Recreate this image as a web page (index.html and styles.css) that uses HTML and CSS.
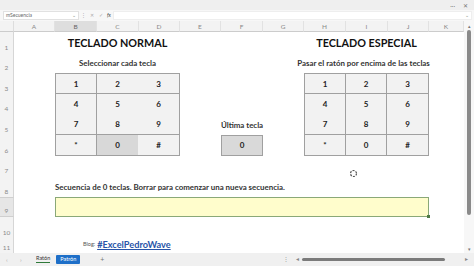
FILE: index.html
```html
<!DOCTYPE html>
<html>
<head>
  <meta charset="UTF-8">
  <title>Teclado</title>
  <link rel="stylesheet" href="styles.css">
</head>
<body>
  <div class="window">
    <!-- Title strip -->
    <div class="titlebar">
      <span class="tb-more">···</span>
      <span class="tb-close">✕</span>
    </div>

    <!-- Formula bar -->
    <div class="formula-bar">
      <div class="name-box">mSecuencia<span class="caret">⌄</span></div>
      <div class="fx-icons">
        <span>⋮</span><span>✕</span><span>✓</span><span class="fx">fx</span>
      </div>
      <div class="formula-input"><span class="caret">⌄</span></div>
    </div>

    <!-- Worksheet -->
    <div class="sheet-area">
      <div class="sheet">
        <div class="corner"></div>
        <div class="col-head">A</div>
        <div class="col-head active">B</div>
        <div class="col-head">C</div>
        <div class="col-head">D</div>
        <div class="col-head">E</div>
        <div class="col-head">F</div>
        <div class="col-head">G</div>
        <div class="col-head">H</div>
        <div class="col-head">I</div>
        <div class="col-head">J</div>
        <div class="col-head">K</div>

        <div class="row-head">1</div>
        <div class="row-head">2</div>
        <div class="row-head">3</div>
        <div class="row-head">4</div>
        <div class="row-head">5</div>
        <div class="row-head">6</div>
        <div class="row-head">7</div>
        <div class="row-head">8</div>
        <div class="row-head active">9</div>
        <div class="row-head">10</div>
        <div class="row-head">11</div>

        <div class="title title-normal">TECLADO NORMAL</div>
        <div class="subtitle sub-normal">Seleccionar cada tecla</div>
        <div class="keypad keypad-normal">
          <div class="key">1</div><div class="key">2</div><div class="key">3</div>
          <div class="key">4</div><div class="key">5</div><div class="key">6</div>
          <div class="key">7</div><div class="key">8</div><div class="key">9</div>
          <div class="key">*</div><div class="key pressed">0</div><div class="key">#</div>
        </div>

        <div class="subtitle last-label">Última tecla</div>
        <div class="last-key">0</div>

        <div class="title title-special">TECLADO ESPECIAL</div>
        <div class="subtitle sub-special">Pasar el ratón por encima de las teclas</div>
        <div class="keypad keypad-special">
          <div class="key">1</div><div class="key">2</div><div class="key">3</div>
          <div class="key">4</div><div class="key">5</div><div class="key">6</div>
          <div class="key">7</div><div class="key">8</div><div class="key">9</div>
          <div class="key">*</div><div class="key">0</div><div class="key">#</div>
        </div>

        <div class="subtitle sequence-text">Secuencia de 0 teclas. Borrar para comenzar una nueva secuencia.</div>
        <div class="sequence-box"><span class="fill-handle"></span></div>

        <div class="blog"><span class="blog-label">Blog:</span><a class="blog-link">#ExcelPedroWave</a></div>
      </div>

      <div class="vscroll">
        <span class="arrow">▴</span>
        <div class="vthumb"></div>
        <span class="arrow">▾</span>
      </div>

      <!-- mouse busy cursor -->
      <svg class="cursor" width="9" height="9" viewBox="0 0 9 9">
        <circle cx="4.5" cy="4.5" r="3" fill="none" stroke="#555" stroke-width="1.2" stroke-dasharray="2 1.2"/>
      </svg>
    </div>

    <!-- Sheet tabs -->
    <div class="tabs">
      <span class="nav">‹</span>
      <span class="nav">›</span>
      <span class="tab current">Ratón</span>
      <span class="tab blue">Patrón</span>
      <span class="add">+</span>
      <span class="spacer"></span>
      <span class="dots">⋮</span>
      <div class="hscroll">
        <span class="arrow">◂</span>
        <div class="hthumb"></div>
        <span class="arrow">▸</span>
      </div>
    </div>
  </div>
</body>
</html>
```

FILE: styles.css
```css
/* Base */
* {
  margin: 0;
  padding: 0;
  box-sizing: border-box;
}

body {
  font-family: 'Lato', 'Open Sans', sans-serif;
  color: #222;
  background: #fff;
  overflow: hidden;
}

.window {
  width: 474px;
  height: 266px;
  display: flex;
  flex-direction: column;
  background: #fcfcfc;
}

/* Title strip */
.titlebar {
  height: 10px;
  background: #efefef;
  display: flex;
  justify-content: flex-end;
  align-items: center;
  gap: 8px;
  padding-right: 6px;
  font-size: 6px;
  color: #777;
}

/* Formula bar */
.formula-bar {
  height: 11px;
  display: flex;
  align-items: center;
  background: #f7f7f7;
  padding: 0 2px 1px 3px;
  font-size: 5px;
  color: #666;
}

.name-box {
  width: 76px;
  height: 9px;
  border: 1px solid #e1e1e1;
  background: #fff;
  display: flex;
  align-items: center;
  justify-content: space-between;
  padding: 0 2px;
}

.fx-icons {
  width: 34px;
  display: flex;
  justify-content: space-around;
  color: #aaa;
}

.fx-icons .fx {
  font-style: italic;
  color: #444;
}

.formula-input {
  flex: 1;
  height: 9px;
  background: #fff;
  border: 1px solid #eee;
  display: flex;
  justify-content: flex-end;
  align-items: center;
  padding-right: 2px;
}

.caret {
  color: #888;
  font-size: 5px;
}

/* Worksheet */
.sheet-area {
  position: relative;
  height: 232px;
  display: flex;
}

.sheet {
  width: 464px;
  height: 232px;
  overflow: hidden;
  display: grid;
  grid-template-columns: 14px 41px 42px 42px 41px 41px 42px 41px 42px 42px 41px 35px;
  grid-template-rows: 11px repeat(10, 20.6px) 15px;
  background: #fff;
}

.corner {
  background: #f3f3f3;
  border-right: 1px solid #ddd;
  border-bottom: 1px solid #ccc;
}

.col-head {
  background: #f3f3f3;
  border-right: 1px solid #e2e2e2;
  border-bottom: 1px solid #ccc;
  font-size: 6.5px;
  color: #888;
  display: flex;
  align-items: center;
  justify-content: center;
}

.col-head.active {
  background: #dedede;
  color: #666;
}

.row-head {
  grid-column: 1;
  background: #f3f3f3;
  border-right: 1px solid #d6d6d6;
  font-size: 6.5px;
  color: #8a8a8a;
  display: flex;
  align-items: flex-end;
  justify-content: center;
  padding-bottom: 2px;
}

.row-head.active {
  background: #e6e6e6;
  border-top: 1px solid #cfcfcf;
  border-bottom: 1px solid #cfcfcf;
}

/* Cell contents */
.title {
  grid-row: 2;
  font-size: 10.8px;
  font-weight: 700;
  color: #111;
  display: flex;
  align-items: center;
  justify-content: center;
  white-space: nowrap;
}

.title-normal {
  grid-column: 3 / 6;
}

.title-special {
  grid-column: 9 / 12;
}

.subtitle {
  font-size: 7.9px;
  font-weight: 700;
  color: #333;
  display: flex;
  align-items: center;
  justify-content: center;
  white-space: nowrap;
}

.sub-normal {
  grid-column: 3 / 6;
  grid-row: 3;
}

.sub-special {
  grid-column: 8 / 13;
  grid-row: 3;
}

.keypad {
  grid-row: 4 / 8;
  display: grid;
  grid-template-columns: 1fr 1fr 1fr;
  grid-template-rows: repeat(4, 1fr);
  border: 1px solid #a0a0a0;
  background: #f2f2f2;
}

.keypad-normal {
  grid-column: 3 / 6;
}

.keypad-special {
  grid-column: 9 / 12;
}

.key {
  display: flex;
  align-items: center;
  justify-content: center;
  font-size: 8px;
  font-weight: 700;
  color: #222;
}

/* top row underlined, bottom row overlined */
.key:nth-child(-n+3) {
  border-bottom: 1px solid #a0a0a0;
}

.key:nth-child(n+10) {
  border-top: 1px solid #a0a0a0;
}

.keypad-normal .key:nth-child(3n+1) {
  border-right: 1px solid #a0a0a0;
}

.keypad-special .key:not(:nth-child(3n)) {
  border-right: 1px solid #a0a0a0;
}

.key.pressed {
  background: #d8d8d8;
}

.last-label {
  grid-column: 7 / 8;
  grid-row: 6;
}

.last-key {
  grid-column: 7 / 8;
  grid-row: 7;
  background: #d9d9d9;
  border: 1px solid #a0a0a0;
  display: flex;
  align-items: center;
  justify-content: center;
  font-size: 8px;
  font-weight: 700;
}

.sequence-text {
  grid-column: 3 / 10;
  grid-row: 9;
  justify-content: flex-start;
  padding-top: 1px;
}

.sequence-box {
  grid-column: 3 / 12;
  grid-row: 10;
  position: relative;
  background: #fffdcc;
  border: 1px solid #8aa878;
}

.fill-handle {
  position: absolute;
  right: -2px;
  bottom: -2px;
  width: 3px;
  height: 3px;
  background: #4f7a46;
}

.blog {
  grid-column: 3 / 6;
  grid-row: 12;
  display: flex;
  align-items: center;
  padding-bottom: 2px;
  padding-left: 28px;
  gap: 2px;
  white-space: nowrap;
}

.blog-label {
  font-size: 5.5px;
  color: #555;
}

.blog-link {
  font-size: 9.2px;
  font-weight: 700;
  color: #2854a8;
  text-decoration: underline;
}

/* Vertical scrollbar */
.vscroll {
  width: 10px;
  background: #f7f7f7;
  display: flex;
  flex-direction: column;
  align-items: center;
  padding: 2px 0 0;
  font-size: 5px;
  color: #777;
}

.vthumb {
  width: 4px;
  height: 185px;
  background: #8a8a8a;
  border-radius: 2px;
  margin: 1px 0 31px;
}

.cursor {
  position: absolute;
  left: 349px;
  top: 148px;
}

/* Sheet tabs */
.tabs {
  height: 13px;
  display: flex;
  align-items: center;
  background: #f0f0f0;
  font-size: 5.5px;
  line-height: 1;
  color: #555;
  padding-left: 6px;
}

.nav {
  width: 14px;
  color: #aaa;
  font-size: 6px;
  line-height: 1;
}

.tab {
  margin-left: 4px;
}

.tab.current {
  margin-left: 2px;
  padding-bottom: 1px;
  border-bottom: 1px solid #2f7a3a;
  color: #333;
}

.tab.blue {
  margin-left: 6px;
  background: #1e6fc8;
  color: #fff;
  padding: 2px 4px;
  border-radius: 1px;
}

.add {
  margin-left: 20px;
  font-size: 7px;
  color: #777;
}

.spacer {
  flex: 1;
}

.dots {
  color: #999;
  margin-right: 7px;
}

.hscroll {
  width: 172px;
  display: flex;
  align-items: center;
  gap: 3px;
  margin-right: 6px;
  color: #888;
}

.hthumb {
  flex: 1;
  height: 3px;
  background: #7b7b7b;
  border-radius: 2px;
  margin-right: 17px;
}
```
